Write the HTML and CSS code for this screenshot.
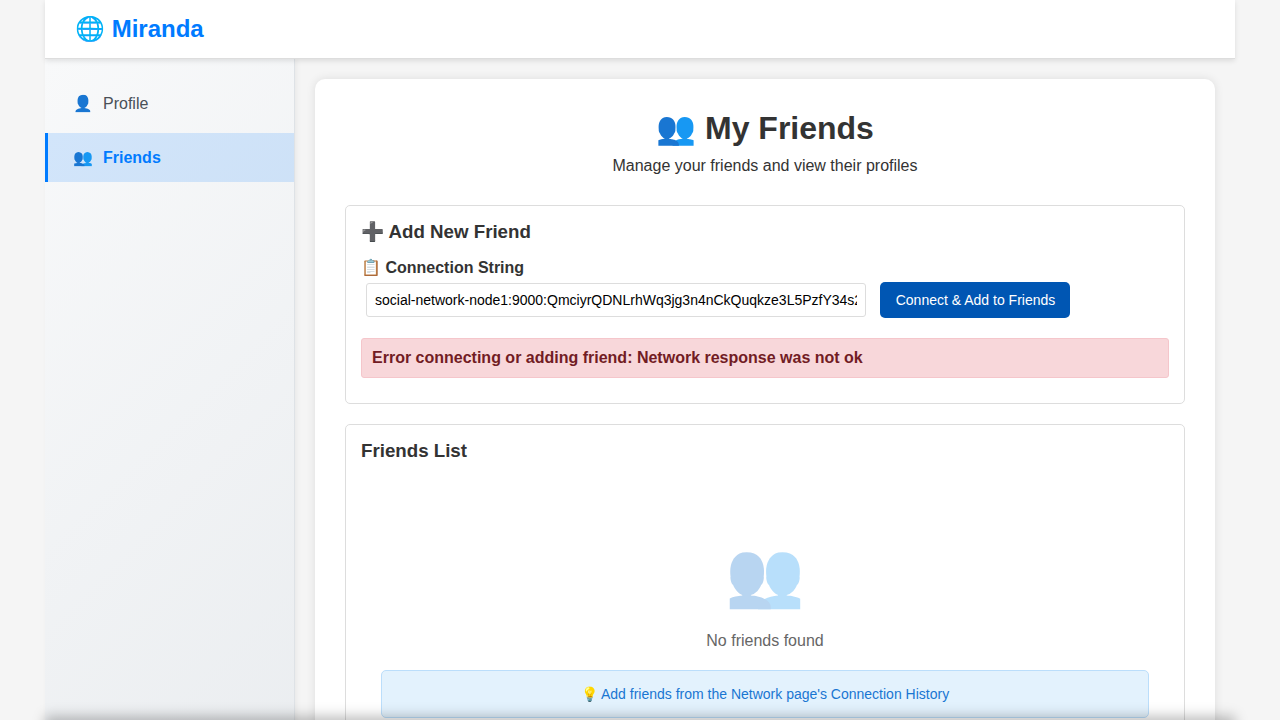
FILE: index.html
```html
<!DOCTYPE html>
<html lang="en">
<head>
<meta charset="utf-8">
<title>Miranda</title>
<link rel="stylesheet" href="styles.css">
</head>
<body>
<div class="app">
  <header class="topbar"><div class="brand">🌐 Miranda</div></header>
  <div class="layout">
    <nav class="sidebar">
      <a class="nav-item"><span class="nav-icon">👤</span><span>Profile</span></a>
      <a class="nav-item active"><span class="nav-icon">👥</span><span>Friends</span></a>
    </nav>
    <main class="main">
      <div class="container">
        <div class="page-head">
          <h1>👥 My Friends</h1>
          <p>Manage your friends and view their profiles</p>
        </div>
        <section class="section add">
          <h3>➕ Add New Friend</h3>
          <label class="label" for="conn">📋 Connection String</label>
          <div class="row">
            <input id="conn" class="input" type="text" value="social-network-node1:9000:QmciyrQDNLrhWq3jg3n4nCkQuqkze3L5PzfY34s2">
            <button class="button" type="button">Connect &amp; Add to Friends</button>
          </div>
          <div class="error">Error connecting or adding friend: Network response was not ok</div>
        </section>
        <section class="section">
          <h3>Friends List</h3>
          <div class="empty">
            <div class="empty-icon">👥</div>
            <p class="empty-text">No friends found</p>
            <div class="hint">💡 Add friends from the Network page's Connection History</div>
          </div>
        </section>
      </div>
    </main>
  </div>
</div>
<div class="drawer"></div>
</body>
</html>
```
FILE: styles.css
```css
* { box-sizing: border-box; }
html, body { height: 100%; overflow: hidden; }
body {
  margin: 0;
  background: #f5f5f5;
  color: #333;
  font: 16px/20px "Liberation Sans", Arial, sans-serif;
}
h1, h3, p { margin: 0; }
.app { width: 1190px; height: 860px; margin: 0 auto; display: flex; flex-direction: column; }
.topbar {
  position: relative;
  z-index: 2;
  flex: none;
  height: 59px;
  padding: 0 30px;
  display: flex;
  align-items: center;
  background: #fff;
  border-bottom: 1px solid #ddd;
  box-shadow: 0 2px 5px rgba(0, 0, 0, .1);
}
.brand { font-size: 24px; line-height: 28px; font-weight: bold; color: #007bff; }
.layout { flex: 1; min-height: 0; display: flex; }
.sidebar {
  flex: none;
  width: 250px;
  padding-top: 20px;
  display: flex;
  flex-direction: column;
  gap: 5px;
  background: linear-gradient(135deg, #f8f9fa 0%, #e9ecef 100%);
  border-right: 1px solid #dee2e6;
  box-shadow: 2px 0 5px rgba(0, 0, 0, .05);
}
.nav-item {
  height: 49px;
  padding-left: 25px;
  border-left: 3px solid transparent;
  display: flex;
  align-items: center;
  gap: 10px;
  color: #495057;
}
.nav-item.active {
  background: rgba(0, 123, 255, .15);
  border-left-color: #007bff;
  color: #007bff;
  font-weight: bold;
}
.nav-icon { width: 20px; display: flex; justify-content: center; }
.main { flex: 1; padding: 20px; }
.container {
  height: 760px;
  padding: 30px;
  background: #fff;
  border-radius: 10px;
  box-shadow: 0 0 10px rgba(0, 0, 0, .1);
}
.page-head { height: 96px; text-align: center; }
.page-head h1 { font-size: 32px; line-height: 39px; margin-bottom: 8px; }
.page-head p { line-height: 20px; }
.section { border: 1px solid #ddd; border-radius: 5px; padding: 15px; margin-bottom: 20px; }
.section h3 { font-size: 18.72px; line-height: 21px; }
.add { height: 199px; }
.label { display: block; margin-top: 16px; line-height: 20px; font-weight: bold; }
.row { display: flex; align-items: center; gap: 14px; padding-left: 5px; margin: 4px 0 20px; }
.input {
  width: 500px;
  height: 34px;
  padding: 8px;
  border: 1px solid #ddd;
  border-radius: 3px;
  font: 14px "Liberation Sans", Arial, sans-serif;
  color: #000;
  background: #fff;
}
.button {
  width: 190px;
  height: 36px;
  padding: 0 0 0 1px;
  border: 0;
  border-radius: 5px;
  background: #0056b3;
  color: #fff;
  font: 14px "Liberation Sans", Arial, sans-serif;
}
.error {
  height: 40px;
  padding: 9px 10px;
  border: 1px solid #f5c6cb;
  border-radius: 3px;
  background: #f8d7da;
  color: #721c24;
  font-weight: bold;
}
.empty { padding: 76px 20px 40px; text-align: center; }
.empty-icon { font-size: 64px; line-height: 75px; opacity: .3; }
.empty-text { margin: 19px 0; color: #666; }
.hint {
  height: 48px;
  line-height: 46px;
  border: 1px solid #bbdefb;
  border-radius: 5px;
  background: #e3f2fd;
  color: #1976d2;
  font-size: 14px;
}
.drawer {
  position: fixed;
  top: 100%;
  left: 45px;
  width: 1190px;
  height: 60px;
  z-index: 5;
  background: #fff;
  box-shadow: 0 -4px 12px rgba(0, 0, 0, .25);
}
```
